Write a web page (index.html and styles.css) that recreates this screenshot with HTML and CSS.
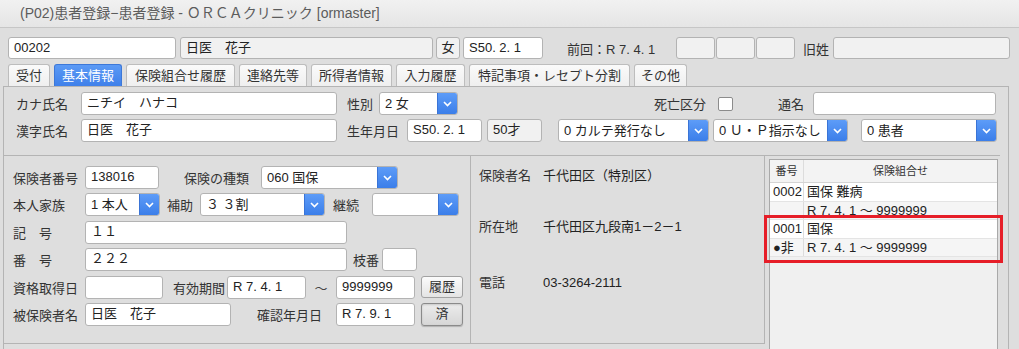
FILE: index.html
```html
<!DOCTYPE html>
<html lang="ja">
<head>
  <meta charset="UTF-8">
  <title>患者登録</title>
  <link rel="stylesheet" href="styles.css">
</head>
<body>
  <div class="titlebar">(P02)患者登録−患者登録 - ＯＲＣＡクリニック [ormaster]</div>

  <div class="toprow">
    <div class="field w-id">00202</div>
    <div class="field gray w-name">日医　花子</div>
    <div class="field gray w-sex">女</div>
    <div class="field w-birth">S50. 2. 1</div>
    <div class="prev">前回：R 7. 4. 1</div>
    <div class="boxes">
      <div class="field gray w-box"></div>
      <div class="field gray w-box"></div>
      <div class="field gray w-box"></div>
    </div>
    <div class="lbl kyusei">旧姓</div>
    <div class="field gray w-kyusei"></div>
  </div>

  <div class="tabs">
    <div class="tab t1">受付</div>
    <div class="tab t2 active">基本情報</div>
    <div class="tab t3">保険組合せ履歴</div>
    <div class="tab t4">連絡先等</div>
    <div class="tab t5">所得者情報</div>
    <div class="tab t6">入力履歴</div>
    <div class="tab t7">特記事項・レセプト分割</div>
    <div class="tab t8">その他</div>
  </div>

  <div class="tabpanel">
    <div class="upper">
      <div class="row">
        <div class="lbl u-lbl">カナ氏名</div>
        <div class="field w-kana">ニチイ　ハナコ</div>
        <div class="lbl sex-lbl">性別</div>
        <div class="select w-sexsel"><span>2 女</span><i class="btn"><svg width="9" height="6" viewBox="0 0 9 6"><polyline points="1,1 4.5,4.5 8,1" fill="none" stroke="#fff" stroke-width="1.6"/></svg></i></div>
        <div class="lbl death-lbl">死亡区分</div>
        <div class="check"></div>
        <div class="lbl tsusho-lbl">通名</div>
        <div class="field w-tsusho"></div>
      </div>
      <div class="row">
        <div class="lbl u-lbl">漢字氏名</div>
        <div class="field w-kana">日医　花子</div>
        <div class="lbl birth-lbl">生年月日</div>
        <div class="field w-birth2">S50. 2. 1</div>
        <div class="field gray w-age">50才</div>
        <div class="select w-karte"><span>0 カルテ発行なし</span><i class="btn"><svg width="9" height="6" viewBox="0 0 9 6"><polyline points="1,1 4.5,4.5 8,1" fill="none" stroke="#fff" stroke-width="1.6"/></svg></i></div>
        <div class="select w-up"><span>0 Ｕ・Ｐ指示なし</span><i class="btn"><svg width="9" height="6" viewBox="0 0 9 6"><polyline points="1,1 4.5,4.5 8,1" fill="none" stroke="#fff" stroke-width="1.6"/></svg></i></div>
        <div class="select w-kanja"><span>0 患者</span><i class="btn"><svg width="9" height="6" viewBox="0 0 9 6"><polyline points="1,1 4.5,4.5 8,1" fill="none" stroke="#fff" stroke-width="1.6"/></svg></i></div>
      </div>
    </div>

    <div class="lower">
      <div class="ins-form">
        <div class="row">
          <div class="lbl f-lbl">保険者番号</div>
          <div class="field w-hokno">138016</div>
          <div class="lbl shurui-lbl">保険の種類</div>
          <div class="select w-shurui"><span>060 国保</span><i class="btn"><svg width="9" height="6" viewBox="0 0 9 6"><polyline points="1,1 4.5,4.5 8,1" fill="none" stroke="#fff" stroke-width="1.6"/></svg></i></div>
        </div>
        <div class="row">
          <div class="lbl f-lbl">本人家族</div>
          <div class="select w-honnin"><span>1 本人</span><i class="btn"><svg width="9" height="6" viewBox="0 0 9 6"><polyline points="1,1 4.5,4.5 8,1" fill="none" stroke="#fff" stroke-width="1.6"/></svg></i></div>
          <div class="lbl hojo-lbl">補助</div>
          <div class="select w-hojo"><span>３ ３割</span><i class="btn"><svg width="9" height="6" viewBox="0 0 9 6"><polyline points="1,1 4.5,4.5 8,1" fill="none" stroke="#fff" stroke-width="1.6"/></svg></i></div>
          <div class="lbl keizoku-lbl">継続</div>
          <div class="select w-keizoku"><span></span><i class="btn"><svg width="9" height="6" viewBox="0 0 9 6"><polyline points="1,1 4.5,4.5 8,1" fill="none" stroke="#fff" stroke-width="1.6"/></svg></i></div>
        </div>
        <div class="row">
          <div class="lbl f-lbl">記　号</div>
          <div class="field w-kigo">１１</div>
        </div>
        <div class="row">
          <div class="lbl f-lbl">番　号</div>
          <div class="field w-kigo">２２２</div>
          <div class="lbl eda-lbl">枝番</div>
          <div class="field w-eda"></div>
        </div>
        <div class="row">
          <div class="lbl f-lbl">資格取得日</div>
          <div class="field w-shikaku"></div>
          <div class="lbl yuko-lbl">有効期間</div>
          <div class="field w-date">R 7. 4. 1</div>
          <div class="tilde">〜</div>
          <div class="field w-date">9999999</div>
          <div class="button">履歴</div>
        </div>
        <div class="row">
          <div class="lbl f-lbl">被保険者名</div>
          <div class="field w-hihoken">日医　花子</div>
          <div class="lbl kakunin-lbl">確認年月日</div>
          <div class="field w-date">R 7. 9. 1</div>
          <div class="button pressed">済</div>
        </div>
      </div>

      <div class="ins-info">
        <div class="info-row">
          <div class="lbl i-lbl">保険者名</div>
          <div class="i-val">千代田区（特別区）</div>
        </div>
        <div class="info-row">
          <div class="lbl i-lbl">所在地</div>
          <div class="i-val">千代田区九段南1－2－1</div>
        </div>
        <div class="info-row">
          <div class="lbl i-lbl">電話</div>
          <div class="i-val">03-3264-2111</div>
        </div>
      </div>

      <div class="combo">
        <div class="combo-list">
          <div class="c-head">
            <div class="c-no">番号</div>
            <div class="c-body">保険組合せ</div>
          </div>
          <div class="c-row odd"><div class="c-no">0002</div><div class="c-body">国保 難病</div></div>
          <div class="c-row even"><div class="c-no"></div><div class="c-body">R 7. 4. 1 ～ 9999999</div></div>
          <div class="c-row odd"><div class="c-no">0001</div><div class="c-body">国保</div></div>
          <div class="c-row even"><div class="c-no">●非</div><div class="c-body">R 7. 4. 1 ～ 9999999</div></div>
        </div>
        <div class="highlight"></div>
      </div>
    </div>
  </div>
</body>
</html>
```

FILE: styles.css
```css
* {
  box-sizing: border-box;
}

body {
  margin: 0;
  width: 1019px;
  height: 349px;
  overflow: hidden;
  background-color: #dedede;
  font-family: "Liberation Sans", "Noto Sans CJK JP", sans-serif;
  font-size: 13px;
  color: #222;
}

.titlebar {
  height: 28px;
  padding-left: 20px;
  line-height: 27px;
  font-size: 14px;
  color: #5c5c5c;
  background: linear-gradient(#f1f1f1, #e5e5e5);
  border-bottom: 1px solid #c6c6c6;
}

/* generic widgets */
.field {
  height: 22px;
  padding: 0 5px;
  line-height: 20px;
  white-space: nowrap;
  overflow: hidden;
  background-color: #fff;
  border: 1px solid #b3b3b3;
  border-radius: 3px;
  flex-shrink: 0;
}

.field.gray {
  background-color: #f1f1f1;
}

.lbl {
  color: #333;
  white-space: nowrap;
  flex-shrink: 0;
}

.select {
  display: flex;
  height: 23px;
  background-color: #fff;
  border: 1px solid #b3b3b3;
  border-radius: 3px;
  overflow: hidden;
  flex-shrink: 0;
}

.select span {
  flex: 1;
  padding-left: 5px;
  line-height: 21px;
  white-space: nowrap;
}

.select .btn {
  width: 20px;
  display: flex;
  align-items: center;
  justify-content: center;
  background: linear-gradient(#5d9cf8, #3b7ee9);
  border-left: 1px solid #3a74d6;
}

.button {
  width: 42px;
  height: 22px;
  margin-left: 6px;
  line-height: 20px;
  text-align: center;
  color: #333;
  background: linear-gradient(#fbfbfb, #e4e4e4);
  border: 1px solid #a2a2a2;
  border-radius: 3px;
  flex-shrink: 0;
}

.button.pressed {
  height: 23px;
  background: linear-gradient(#ececec, #d6d6d6);
  border-color: #8a8a8a;
  box-shadow: inset 0 1px 2px rgba(0, 0, 0, 0.15), 0 1px 1px rgba(0, 0, 0, 0.2);
}

.check {
  width: 15px;
  height: 14px;
  background-color: #fff;
  border: 1px solid #8c8c8c;
  border-radius: 2px;
  flex-shrink: 0;
}

/* top row */
.toprow {
  display: flex;
  align-items: center;
  padding: 9px 0 0 8px;
  height: 31px;
}

.w-id { width: 168px; }
.w-name { width: 253px; margin-left: 4px; }
.w-sex { width: 24px; margin-left: 3px; text-align: center; padding: 0; }
.w-birth { width: 80px; margin-left: 3px; }

.prev {
  margin-left: 24px;
  width: 109px;
  color: #333;
  white-space: nowrap;
}

.boxes {
  display: flex;
  gap: 1px;
}

.w-box { width: 39px; }
.kyusei { margin-left: 8px; width: 30px; }
.w-kyusei { width: 177px; }

/* tabs */
.tabs {
  display: flex;
  gap: 4px;
  height: 22px;
  margin-top: 5px;
  padding-left: 8px;
}

.tab {
  height: 22px;
  line-height: 21px;
  text-align: center;
  color: #333;
  background: linear-gradient(#fafafa, #efefef);
  border: 1px solid #bdbdbd;
  border-bottom: none;
  border-radius: 3px 3px 0 0;
  white-space: nowrap;
}

.tab.active {
  color: #fff;
  background: linear-gradient(#5b9af5, #3f80ea);
  border-color: #3d78d8;
}

.t1 { width: 42px; }
.t2 { width: 68px; }
.t3 { width: 109px; }
.t4 { width: 68px; }
.t5 { width: 81px; }
.t6 { width: 69px; }
.t7 { width: 161px; }
.t8 { width: 53px; }

/* content panel */
.tabpanel {
  margin-left: 3px;
  width: 1006px;
  height: 263px;
  border: 1px solid #b4b4b4;
  border-bottom: none;
}

.row {
  display: flex;
  align-items: center;
  height: 23px;
}

.upper {
  display: flex;
  flex-direction: column;
  gap: 4px;
  padding: 5px 0 0 12px;
}

.u-lbl { width: 65px; }
.w-kana { width: 256px; }
.sex-lbl { margin-left: 10px; width: 32px; }
.w-sexsel { width: 79px; }
.death-lbl { margin-left: 196px; width: 64px; }
.tsusho-lbl { margin-left: 45px; width: 35px; }
.w-tsusho { width: 183px; height: 23px; }
.birth-lbl { margin-left: 10px; width: 60px; }
.w-birth2 { width: 75px; height: 23px; }
.w-age { width: 55px; height: 23px; margin-left: 5px; }
.w-karte { width: 151px; margin-left: 16px; }
.w-up { width: 135px; margin-left: 4px; }
.w-kanja { width: 136px; margin-left: 13px; }
.upper .w-kana { height: 23px; }

/* lower area */
.lower {
  display: flex;
  margin-top: 13px;
  width: 996px;
  border-top: 1px solid #b4b4b4;
}

.ins-form {
  width: 467px;
  height: 188px;
  display: flex;
  flex-direction: column;
  gap: 4.4px;
  padding: 10px 0 0 9px;
  border-right: 1px solid #b4b4b4;
  border-bottom: 1px solid #b4b4b4;
}

.f-lbl { width: 72px; }
.w-hokno { width: 74px; height: 23px; }
.shurui-lbl { margin-left: 25px; width: 77px; }
.w-shurui { width: 137px; }
.w-honnin { width: 75px; }
.hojo-lbl { margin-left: 7px; width: 33px; }
.w-hojo { width: 125px; }
.keizoku-lbl { margin-left: 8px; width: 39px; }
.w-keizoku { width: 87px; }
.w-kigo { width: 262px; height: 23px; }
.eda-lbl { margin-left: 6px; width: 29px; }
.w-eda { width: 35px; height: 23px; }
.w-shikaku { width: 78px; height: 23px; }
.yuko-lbl { margin-left: 10px; width: 54px; }
.w-date { width: 79px; height: 23px; }
.tilde { width: 30px; text-align: center; color: #444; }
.w-hihoken { width: 146px; height: 23px; }
.kakunin-lbl { width: 105px; padding-right: 14px; text-align: right; }

.ins-info {
  width: 294px;
  height: 188px;
  display: grid;
  grid-template-rows: 51px 56px auto;
  padding: 10px 0 0 8px;
  border-right: 1px solid #b4b4b4;
  border-bottom: 1px solid #b4b4b4;
}

.info-row {
  display: flex;
  height: 20px;
  line-height: 20px;
}

.i-lbl { width: 64px; }
.i-val { color: #222; white-space: nowrap; }

/* insurance combination list */
.combo {
  position: relative;
  flex: 1;
  padding: 3px 0 0 4px;
}

.combo-list {
  width: 229px;
  height: 200px;
  background-color: #f0f0f0;
  border: 1px solid #a9a9a9;
}

.c-head,
.c-row {
  display: flex;
}

.c-head {
  height: 23px;
  line-height: 22px;
  font-size: 11px;
  color: #333;
  text-align: center;
  background-color: #f3f3f3;
  border-bottom: 1px solid #d4d4d4;
}

.c-row {
  height: 18.6px;
  line-height: 18px;
  white-space: nowrap;
  border-bottom: 1px solid #e4e4e4;
}

.c-row .c-no,
.c-row .c-body {
  padding-left: 3px;
}

.c-no {
  width: 34px;
  flex-shrink: 0;
  border-right: 1px solid #dcdcdc;
}

.c-body {
  flex: 1;
}

.c-row.odd { background-color: #fff; }
.c-row.even { background-color: #f5f5f5; }

.highlight {
  position: absolute;
  left: -1px;
  top: 59px;
  width: 239px;
  height: 48px;
  border: 3px solid #e61e28;
}
```
